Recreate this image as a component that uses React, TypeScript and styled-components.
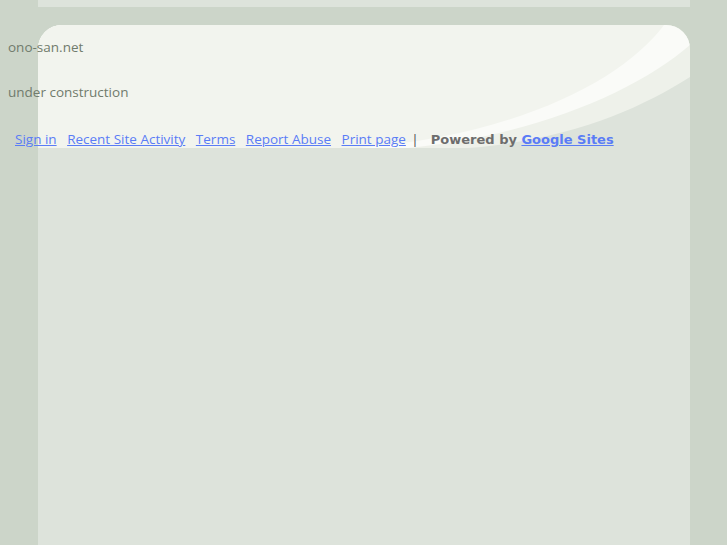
import React from "react";
import styled, { createGlobalStyle } from "styled-components";

const Global = createGlobalStyle`
  html, body {
    margin: 0;
    padding: 0;
    background: #ccd5c9;
  }
  body {
    font-family: "Open Sans", "Liberation Sans", sans-serif;
  }
`;

const Page = styled.div`
  display: grid;
  min-height: 100vh;
`;

const Backdrop = styled.div`
  grid-area: 1 / 1;
  justify-self: center;
  width: 652px;
  display: flex;
  flex-direction: column;
`;

const TopStrip = styled.div`
  height: 7px;
  background: #dde3db;
`;

const Gap = styled.div`
  height: 18px;
`;

const Panel = styled.div`
  height: 123px;
  border-radius: 24px 24px 0 0;
  overflow: hidden;
  background: #dde3db;
  svg {
    display: block;
  }
`;

const Rest = styled.div`
  flex: 1;
  background: #dde3db;
`;

const Content = styled.div`
  grid-area: 1 / 1;
  padding: 0 8px;
  display: flex;
  flex-direction: column;
  align-items: flex-start;
`;

const Line = styled.div<{ $top: number }>`
  margin-top: ${(p) => p.$top}px;
  font-size: 13.5px;
  line-height: 18px;
  color: #707b6c;
`;

const Footer = styled.div`
  margin-top: 29px;
  padding-left: 7px;
  display: flex;
  align-items: baseline;
  font-size: 13.5px;
  line-height: 18px;
`;

const FootLink = styled.a`
  color: #5a7cf6;
  text-decoration: underline;
  margin-right: 10.5px;
  cursor: pointer;
`;

const Sep = styled.span`
  color: #4a4a4a;
  margin-right: 12px;
  margin-left: -5px;
`;

const Powered = styled.span`
  font-family: "DejaVu Sans", sans-serif;
  font-weight: bold;
  font-size: 13px;
  color: #6d6d6d;
  a {
    color: #5a7cf6;
    text-decoration: underline;
  }
`;

export default function App() {
  return (
    <>
      <Global />
      <Page>
        <Backdrop>
          <TopStrip />
          <Gap />
          <Panel>
            <svg width="652" height="123" viewBox="0 0 652 123">
              <path d="M0,0 H652 V52 C600,85 530,115 430,123 H0 Z" fill="#eef1ea" />
              <path d="M0,0 H652 V20 C600,65 500,110 370,123 H0 Z" fill="#fafbf8" />
              <path d="M0,0 H626 C585,55 480,110 320,123 H0 Z" fill="#f2f4ee" />
            </svg>
          </Panel>
          <Rest />
        </Backdrop>
        <Content>
          <Line $top={38}>ono-san.net</Line>
          <Line $top={27}>under construction</Line>
          <Footer>
            <FootLink>Sign in</FootLink>
            <FootLink>Recent Site Activity</FootLink>
            <FootLink>Terms</FootLink>
            <FootLink>Report Abuse</FootLink>
            <FootLink>Print page</FootLink>
            <Sep>|</Sep>
            <Powered>
              Powered by <a>Google Sites</a>
            </Powered>
          </Footer>
        </Content>
      </Page>
    </>
  );
}
